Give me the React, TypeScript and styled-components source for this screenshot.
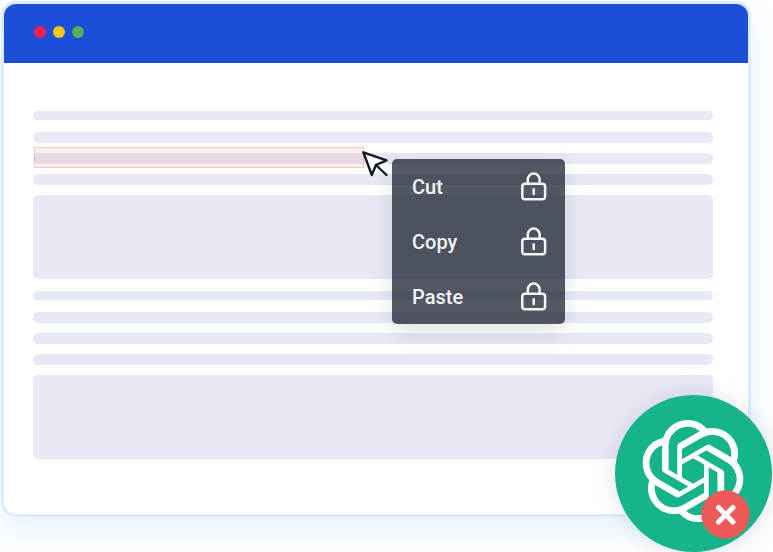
import React from "react";
import styled, { createGlobalStyle, css } from "styled-components";
import { SiOpenai } from "react-icons/si";

const GlobalStyle = createGlobalStyle`
  *, *::before, *::after { box-sizing: border-box; }
  body {
    margin: 0;
    background: #ffffff;
    font-family: Roboto, "Liberation Sans", sans-serif;
    overflow: hidden;
  }
`;

const Scene = styled.main`
  position: relative;
  padding: 1px 22px 35px 1px;
`;

const BrowserWindow = styled.section`
  border: 3px solid #d9edfd;
  border-radius: 15px;
  background: #ffffff;
  box-shadow: 0 16px 32px rgba(56, 152, 236, 0.12);
`;

const TitleBar = styled.header`
  display: flex;
  align-items: center;
  gap: 7px;
  height: 59px;
  padding: 0 30px 4px;
  border-radius: 12px 12px 0 0;
  background: #1d4ed8;
`;

const Dot = styled.span<{ $color: string }>`
  width: 12px;
  height: 12px;
  border-radius: 50%;
  background: ${(p) => p.$color};
`;

const Page = styled.div`
  padding: 48px 35px 55px 29px;
`;

const Paragraph = styled.div`
  display: flex;
  flex-direction: column;
  gap: 10px;

  & + & {
    margin-top: 12px;
  }
`;

const Line = styled.div<{ $lead?: boolean }>`
  height: 11px;
  border-radius: 6px;
  background: #e7e9f5;

  ${(p) =>
    p.$lead &&
    css`
      height: 9px;
      margin-bottom: 2px;
    `}
`;

const SelectedLine = styled(Line)`
  position: relative;
`;

const Block = styled.div`
  height: 84px;
  border-radius: 5px;
  background: #e7e9f5;
`;

const Selection = styled.div`
  position: absolute;
  top: -6px;
  left: 1px;
  width: 330px;
  height: 21px;
  border: 1px solid rgba(236, 89, 90, 0.28);
  background: rgba(244, 67, 54, 0.09);
`;

const Pointer = styled.svg`
  position: absolute;
  top: -4px;
  left: 327px;
  width: 30px;
  height: 30px;
`;

const Menu = styled.div`
  position: absolute;
  top: 6px;
  left: 359px;
  width: 173px;
  border-radius: 5px;
  overflow: hidden;
  background: rgba(17, 24, 39, 0.72);
  box-shadow: 0 8px 24px rgba(17, 24, 39, 0.12);
`;

const MenuButton = styled.button`
  display: flex;
  align-items: center;
  justify-content: space-between;
  width: 100%;
  height: 55px;
  padding: 0 18px 0 20px;
  border: 0;
  background: transparent;
  color: #f3f4f6;
  font: 500 20px/24px Roboto, "Liberation Sans", sans-serif;
  text-align: left;
`;

const LockDrawing = styled.svg`
  width: 26px;
  height: 30px;
`;

const Badge = styled.div`
  position: absolute;
  right: 1px;
  top: 395px;
  display: flex;
  align-items: center;
  justify-content: center;
  width: 157px;
  height: 157px;
  padding: 0 2px 5px 0;
  border-radius: 50%;
  background: #17b38b;
  color: #ffffff;
  box-shadow: 0 0 24px rgba(17, 24, 39, 0.12);
`;

const Denied = styled.svg`
  position: absolute;
  right: 22px;
  bottom: 13px;
  width: 49px;
  height: 49px;
`;

function Lock() {
  return (
    <LockDrawing viewBox="0 0 26 30" fill="none" stroke="currentColor" strokeWidth="2.5" aria-hidden="true">
      <path d="M6.8 11.5V7.5a5.9 5.9 0 0 1 11.8 0V11.5" />
      <rect x="1.3" y="11.7" width="22.8" height="15.6" rx="2.8" />
      <path d="M12.7 17.3v4.6" strokeLinecap="round" />
    </LockDrawing>
  );
}

function ContextMenu() {
  return (
    <Menu role="menu" aria-label="Edit">
      {["Cut", "Copy", "Paste"].map((label) => (
        <MenuButton key={label} type="button" role="menuitem">
          {label}
          <Lock />
        </MenuButton>
      ))}
    </Menu>
  );
}

export default function App() {
  return (
    <>
      <GlobalStyle />
      <Scene>
        <BrowserWindow>
          <TitleBar>
            <Dot $color="#fd1d4c" />
            <Dot $color="#fcc419" />
            <Dot $color="#55ae5b" />
          </TitleBar>
          <Page>
            <Paragraph>
              <Line $lead />
              <Line />
              <SelectedLine>
                <Selection />
                <ContextMenu />
                <Pointer viewBox="0 0 30 30" stroke="#111827" strokeWidth="2.4" aria-hidden="true">
                  <path d="M3.4 3.4L26.5 11.3L16 16L11.8 26Z" fill="#ffffff" strokeLinejoin="round" />
                  <path d="M16 16L26.5 26" strokeLinecap="round" />
                </Pointer>
              </SelectedLine>
              <Line />
              <Block />
            </Paragraph>
            <Paragraph>
              <Line $lead />
              <Line />
              <Line />
              <Line />
              <Block />
            </Paragraph>
          </Page>
        </BrowserWindow>
        <Badge>
          <SiOpenai size={102} aria-hidden="true" />
          <Denied viewBox="0 0 49 49" aria-hidden="true">
            <circle cx="24.5" cy="24.5" r="24.2" fill="#ec5a5a" />
            <path d="M17.5 17.5L32 32M32 17.5L17.5 32" stroke="#ffffff" strokeWidth="5" strokeLinecap="round" />
          </Denied>
        </Badge>
      </Scene>
    </>
  );
}
